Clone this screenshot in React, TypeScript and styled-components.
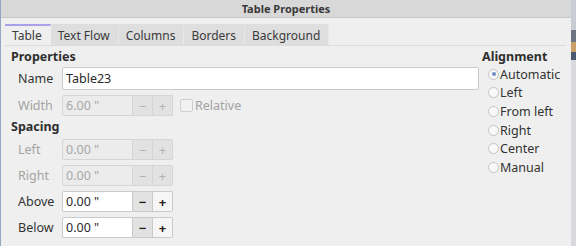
import React from 'react';
import styled, { createGlobalStyle } from 'styled-components';

const Global = createGlobalStyle`
  html, body {
    margin: 0;
    padding: 0;
    background: #3b4350;
  }
  body {
    font-family: 'Noto Sans', 'Open Sans', sans-serif;
    font-size: 12px;
    color: #3a3a3a;
  }
`;

const Frame = styled.div`
  width: 576px;
  height: 246px;
  display: flex;
  overflow: hidden;
`;

const Window = styled.div`
  width: 570px;
  height: 246px;
  display: flex;
  flex-direction: column;
  background: #efefef;
  border-left: 1px solid #93a6bf;
`;

const Desktop = styled.div`
  flex: 1;
  background: linear-gradient(#c9cdd3 0 30px, #6b7584 30px 42px, #caa06a 42px 52px, #4a5a70 52px 60px, #d8dade 60px);
`;

const TitleBar = styled.div`
  height: 17px;
  flex: none;
  background: #d8d8d8;
  border-bottom: 1px solid #c8c8c8;
  display: flex;
  align-items: center;
  justify-content: center;
  font-size: 11px;
  font-weight: bold;
  color: #3a3a3a;
`;

const TabBar = styled.div`
  margin: 6px 5px 0 4px;
  display: flex;
  align-items: flex-end;
  border-bottom: 1px solid #dcdcdc;
`;

const Tab = styled.div<{ active?: boolean }>`
  height: 19px;
  padding: 0 8px 0 7px;
  display: flex;
  align-items: center;
  font-size: 12px;
  color: #3a3a3a;
  background: ${({ active }) => (active ? '#efefef' : '#dedede')};
  border-top: 2px solid ${({ active }) => (active ? '#a9a2ea' : '#dedede')};
  border-right: 1px solid ${({ active }) => (active ? '#efefef' : '#e8e8e8')};
`;

const Content = styled.div`
  display: flex;
  padding: 3px 0 0 10px;
`;

const Main = styled.div`
  width: 470px;
  display: flex;
  flex-direction: column;
`;

const Side = styled.div`
  margin-left: 1px;
  display: flex;
  flex-direction: column;
`;

const Heading = styled.div`
  font-weight: bold;
  font-size: 12.5px;
  color: #2e2e2e;
  height: 15px;
  line-height: 15px;
`;

const Row = styled.div<{ tall?: boolean }>`
  display: flex;
  align-items: center;
  height: ${({ tall }) => (tall ? 23 : 21)}px;
  margin-top: ${({ tall }) => (tall ? 3 : 5)}px;
  padding-left: 7px;
`;

const Label = styled.div<{ disabled?: boolean }>`
  width: 44px;
  font-size: 12.5px;
  color: ${({ disabled }) => (disabled ? '#a3a3a3' : '#333')};
`;

const TextField = styled.div<{ disabled?: boolean; wide?: boolean }>`
  box-sizing: border-box;
  width: ${({ wide }) => (wide ? '417px' : '71px')};
  height: ${({ wide }) => (wide ? '23px' : '21px')};
  padding-left: 3px;
  display: flex;
  align-items: center;
  font-size: 12.5px;
  background: ${({ disabled }) => (disabled ? '#ececec' : '#ffffff')};
  border: 1px solid ${({ disabled }) => (disabled ? '#d5d5d5' : '#cacaca')};
  border-radius: ${({ wide }) => (wide ? '2px' : '2px 0 0 2px')};
  color: ${({ disabled }) => (disabled ? '#a8a8a8' : '#2a2a2a')};
`;

const SpinButton = styled.div<{ disabled?: boolean; light?: boolean }>`
  box-sizing: border-box;
  width: 20px;
  height: 21px;
  display: flex;
  align-items: center;
  justify-content: center;
  font-size: 13px;
  border: 1px solid ${({ disabled }) => (disabled ? '#d5d5d5' : '#cacaca')};
  border-left: none;
  background: ${({ light }) => (light ? '#f6f6f6' : '#e2e2e2')};
  color: ${({ disabled }) => (disabled ? '#b3b3b3' : '#222')};
  font-weight: ${({ disabled }) => (disabled ? 'normal' : 'bold')};
  &:last-child {
    border-radius: 0 2px 2px 0;
  }
`;

const Check = styled.div`
  margin-left: 7px;
  width: 11px;
  height: 11px;
  border: 1px solid #cfcfcf;
  border-radius: 2px;
  background: #f2f2f2;
`;

const CheckLabel = styled.div`
  margin-left: 2px;
  color: #a3a3a3;
  font-size: 12.5px;
`;

const Gap = styled.div<{ h: number }>`
  height: ${({ h }) => h}px;
`;

const RadioRow = styled.div`
  display: flex;
  align-items: center;
  height: 18.6px;
  padding-left: 6px;
  font-size: 12.5px;
  color: #333;
`;

const RadioDot = styled.div<{ checked?: boolean }>`
  box-sizing: border-box;
  width: 11px;
  height: 11px;
  margin-right: 1px;
  border-radius: 50%;
  border: 1px solid #c4c4c4;
  background: #f8f8f8;
  display: flex;
  align-items: center;
  justify-content: center;
  &::after {
    content: '';
    width: 4px;
    height: 4px;
    border-radius: 50%;
    background: ${({ checked }) => (checked ? '#6d8fc6' : 'transparent')};
  }
`;

type SpinProps = { label: string; value: string; disabled?: boolean; children?: React.ReactNode };

const SpinRow = ({ label, value, disabled, children }: SpinProps) => (
  <Row>
    <Label disabled={disabled}>{label}</Label>
    <TextField disabled={disabled}>{value}</TextField>
    <SpinButton disabled={disabled}>−</SpinButton>
    <SpinButton disabled={disabled} light={!disabled}>+</SpinButton>
    {children}
  </Row>
);

const alignments = ['Automatic', 'Left', 'From left', 'Right', 'Center', 'Manual'];

export default function App() {
  return (
    <Frame>
      <Global />
      <Window>
        <TitleBar>Table Properties</TitleBar>
        <TabBar>
          <Tab active>Table</Tab>
          <Tab>Text Flow</Tab>
          <Tab>Columns</Tab>
          <Tab>Borders</Tab>
          <Tab>Background</Tab>
        </TabBar>
        <Content>
          <Main>
            <Heading>Properties</Heading>
            <Row tall>
              <Label>Name</Label>
              <TextField wide>Table23</TextField>
            </Row>
            <SpinRow label="Width" value={'6.00 "'} disabled>
              <Check />
              <CheckLabel>Relative</CheckLabel>
            </SpinRow>
            <Gap h={3} />
            <Heading>Spacing</Heading>
            <SpinRow label="Left" value={'0.00 "'} disabled />
            <SpinRow label="Right" value={'0.00 "'} disabled />
            <SpinRow label="Above" value={'0.00 "'} />
            <SpinRow label="Below" value={'0.00 "'} />
          </Main>
          <Side>
            <Heading>Alignment</Heading>
            <Gap h={1} />
            {alignments.map((a, i) => (
              <RadioRow key={a}>
                <RadioDot checked={i === 0} />
                {a}
              </RadioRow>
            ))}
          </Side>
        </Content>
      </Window>
      <Desktop />
    </Frame>
  );
}
